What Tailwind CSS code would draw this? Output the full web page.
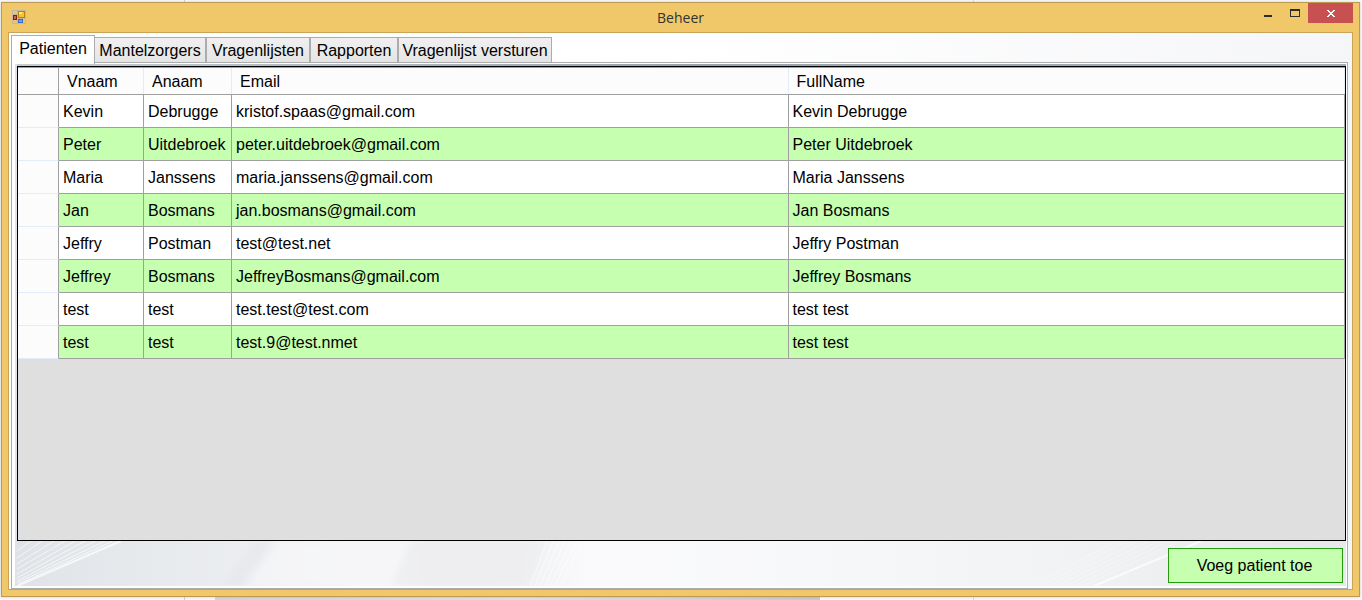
<!DOCTYPE html>
<html lang="nl">
<head>
<meta charset="utf-8">
<meta name="viewport" content="width=device-width, initial-scale=1">
<title>Beheer</title>
<script src="https://cdn.jsdelivr.net/npm/@tailwindcss/browser@4"></script>
</head>
<body class="flex min-h-screen flex-col bg-[#fafafa] font-['Liberation_Sans',Arial,sans-serif] text-base text-black">
<!-- page behind the window -->
<div class="absolute inset-0 -z-10 overflow-hidden" aria-hidden="true">
  <div class="absolute inset-y-0 left-[184px] w-px bg-[#d2d2d2]"></div>
  <div class="absolute inset-y-0 left-[973px] w-px bg-[#dedede]"></div>
  <div class="absolute bottom-0 left-[215px] h-1 w-[605px] bg-linear-to-r from-[#d5d7d9] via-[#e2e4e6] to-[#c9cbce]"></div>
</div>

<div class="mt-[2px] mr-[2px] mb-[3px] ml-px flex grow flex-col border border-[#bc9a50] bg-[#f0c869] px-[6px] pb-[6px] shadow-[0_0_3px_#0000002e]">
  <header class="grid h-[29px] grid-cols-[1fr_auto_1fr] items-start">
    <svg class="mt-[7px] ml-1 h-[14px] w-[14px]" viewBox="0 0 14 14" shape-rendering="crispEdges" aria-hidden="true">
      <path d="M.5 .5h13v13h-13zM.5 4.500h5M5.500 .5v13M5.500 8.500h8" fill="#e6c67a" stroke="#c3b99e"/>
      <rect x="6" y="1" width="7" height="7" fill="#b88310"/>
      <rect x="7" y="2" width="5" height="5" fill="#f5c52d"/>
      <rect x="7" y="2" width="3" height="2" fill="#ffe991"/>
      <rect x="1" y="5" width="4" height="5" fill="#8c1715"/>
      <rect x="2" y="6" width="2" height="3" fill="#cb6055"/>
      <rect x="6" y="9" width="5" height="4" fill="#3368c3"/>
      <rect x="7" y="10" width="3" height="2" fill="#70a4f2"/>
    </svg>
    <h1 class="mt-[5px] font-['Open_Sans','Noto_Sans',sans-serif] text-sm leading-5 text-[#333]">Beheer</h1>
    <div class="flex justify-end">
      <button type="button" aria-label="Minimaliseren" class="flex h-5 w-[27px] items-center justify-center">
        <svg class="h-5 w-[27px]" viewBox="0 0 27 20" shape-rendering="crispEdges"><rect x="9" y="12" width="8" height="2" fill="#2b2b2b"/></svg>
      </button>
      <button type="button" aria-label="Maximaliseren" class="flex h-5 w-[26px] items-center justify-center">
        <svg class="h-5 w-[26px]" viewBox="0 0 26 20" shape-rendering="crispEdges"><path d="M8 6h10v8H8zM9 8v5h8V8z" fill="#2b2b2b" fill-rule="evenodd"/></svg>
      </button>
      <button type="button" aria-label="Sluiten" class="flex h-5 w-[45px] items-center justify-center bg-[#c75050]">
        <svg class="h-5 w-[45px]" viewBox="0 0 45 20" shape-rendering="crispEdges"><path d="M19 7h2v1h1v1h2V8h1V7h2v1h-1v1h-1v1h-1v1h1v1h1v1h1v1h-2v-1h-1v-1h-2v1h-1v1h-2v-1h1v-1h1v-1h1v-1h-1V9h-1V8h-1z" fill="#fff"/></svg>
      </button>
    </div>
  </header>

  <main class="flex grow flex-col border border-[#c9a458] bg-linear-to-r from-[#fcfcfc] via-white to-[#f5f6f8] pr-1 pl-[2px]">
    <div role="tablist" class="mt-[2px] flex h-[27px] items-end">
      <button type="button" role="tab" id="tab-patienten" aria-controls="patienten" aria-selected="true" class="relative z-10 -mb-[2px] h-[29px] w-[84px] border border-b-0 border-[#acacac] bg-white pb-[3px] text-center leading-[22px]">Patienten</button>
      <button type="button" role="tab" aria-selected="false" class="h-[25px] w-[111px] border border-l-0 border-b-0 border-[#acacac] bg-linear-to-b from-[#f0f0f0] to-[#e5e5e5] pt-[2px] leading-[22px]">Mantelzorgers</button>
      <button type="button" role="tab" aria-selected="false" class="h-[25px] w-[104px] border border-b-0 border-[#acacac] bg-linear-to-b from-[#f0f0f0] to-[#e5e5e5] pt-[2px] leading-[22px]">Vragenlijsten</button>
      <button type="button" role="tab" aria-selected="false" class="h-[25px] w-[88px] border border-b-0 border-[#acacac] bg-linear-to-b from-[#f0f0f0] to-[#e5e5e5] pt-[2px] leading-[22px]">Rapporten</button>
      <button type="button" role="tab" aria-selected="false" class="h-[25px] w-[154px] border border-b-0 border-[#acacac] bg-linear-to-b from-[#f0f0f0] to-[#e5e5e5] pt-[2px] leading-[22px]">Vragenlijst versturen</button>
    </div>

    <section id="patienten" role="tabpanel" aria-labelledby="tab-patienten" class="flex grow flex-col border border-[#acacac] bg-white pt-px pr-px pb-[2px] pl-[3px]">
      <div class="relative isolate flex grow flex-col bg-[#dfe3e8] pl-[2px]">
        <div class="h-[2px] -z-10 bg-linear-to-r from-[#c5ccd2] via-[#9aa4ad] to-[#a4acb6]"></div>
        <div class="flex grow flex-col border border-black bg-[#dfdfdf]">
          <table class="w-full table-fixed border-separate border-spacing-0 text-left">
            <colgroup><col class="w-[41px]"><col class="w-[85px]"><col class="w-[88px]"><col><col></colgroup>
            <thead class="bg-[#fcfcfc]">
              <tr class="h-7 *:border-t *:border-b *:border-[#a0a0a0] *:p-0 *:font-normal *:leading-6">
                <td class="border-r"></td>
                <th scope="col"><div class="border-r border-[#e3edf9] pt-[2px] pl-2">Vnaam</div></th>
                <th scope="col"><div class="border-r border-[#e3edf9] pt-[2px] pl-2">Anaam</div></th>
                <th scope="col"><div class="border-r border-[#e3edf9] pt-[2px] pl-2">Email</div></th>
                <th scope="col"><div class="border-r border-[#e3edf9] pt-[2px] pl-2">FullName</div></th>
              </tr>
            </thead>
            <tbody class="[&_td]:h-[33px] [&_td]:border-r [&_td]:border-b [&_td]:border-[#a0a0a0] [&_td]:pt-[2px] [&_td]:pr-0 [&_td]:pb-0 [&_td]:pl-1 [&_th]:border-r [&_th]:border-b [&_th]:border-r-[#a0a0a0] [&_th]:border-b-[#e3edf9] [&_th]:bg-[#fcfcfc]">
              <tr class="bg-white"><th scope="row" aria-label="Rij 1"></th><td>Kevin</td><td>Debrugge</td><td>kristof.spaas@gmail.com</td><td>Kevin Debrugge</td></tr>
              <tr class="bg-[#c6ffb0]"><th scope="row" aria-label="Rij 2"></th><td>Peter</td><td>Uitdebroek</td><td>peter.uitdebroek@gmail.com</td><td>Peter Uitdebroek</td></tr>
              <tr class="bg-white"><th scope="row" aria-label="Rij 3"></th><td>Maria</td><td>Janssens</td><td>maria.janssens@gmail.com</td><td>Maria Janssens</td></tr>
              <tr class="bg-[#c6ffb0]"><th scope="row" aria-label="Rij 4"></th><td>Jan</td><td>Bosmans</td><td>jan.bosmans@gmail.com</td><td>Jan Bosmans</td></tr>
              <tr class="bg-white"><th scope="row" aria-label="Rij 5"></th><td>Jeffry</td><td>Postman</td><td>test@test.net</td><td>Jeffry Postman</td></tr>
              <tr class="bg-[#c6ffb0]"><th scope="row" aria-label="Rij 6"></th><td>Jeffrey</td><td>Bosmans</td><td>JeffreyBosmans@gmail.com</td><td>Jeffrey Bosmans</td></tr>
              <tr class="bg-white"><th scope="row" aria-label="Rij 7"></th><td>test</td><td>test</td><td>test.test@test.com</td><td>test test</td></tr>
              <tr class="bg-[#c6ffb0]"><th scope="row" aria-label="Rij 8"></th><td>test</td><td>test</td><td>test.9@test.nmet</td><td>test test</td></tr>
            </tbody>
          </table>
        </div>
        <footer class="relative flex h-[45px] items-start justify-end pt-[7px] pr-[3px]">
          <!-- decorative backdrop -->
          <svg class="absolute inset-0 -z-10 h-full w-full" viewBox="0 0 1329 45" preserveAspectRatio="none" aria-hidden="true">
            <defs>
              <linearGradient id="base"><stop offset="0" stop-color="#dfe3e7"/><stop offset=".08" stop-color="#e6e9ec"/><stop offset=".17" stop-color="#ebedf0"/><stop offset=".22" stop-color="#f2f3f5"/><stop offset=".28" stop-color="#f5f6f9"/><stop offset=".31" stop-color="#eff0f2"/><stop offset=".38" stop-color="#f0f1f3"/><stop offset=".43" stop-color="#fafafc"/><stop offset=".6" stop-color="#f7f8f9"/><stop offset=".8" stop-color="#f1f2f4"/><stop offset="1" stop-color="#e6e8eb"/></linearGradient>
              <filter id="soft"><feGaussianBlur stdDeviation="3"/></filter>
            </defs>
            <rect width="1329" height="45" fill="url(#base)"/>
            <g filter="url(#soft)">
              <path d="M205 45L238 0H256L222 45z" fill="#e4e6e9" opacity=".6"/>
              <path d="M230 45L262 0H392L374 45z" fill="#f6f7f9" opacity=".7"/>
              <path d="M374 45L394 0H530L512 45z" fill="#ecedef" opacity=".6"/>
            </g>
            <g fill="none" stroke="#fff" opacity=".65">
              <path d="M0 10L14 0M0 17L25 0M0 23L37 0M0 28L48 0M0 33L58 0M0 37L68 0M0 40L78 0M0 42L88 0M2 43L96 0"/>
              <path d="M513 45L530 0M518 45L536 0M523 45L542 0M528 45L548 0M533 45L554 0M538 45L560 0M543 45L566 0" stroke-opacity=".9"/>
              <path d="M1015 45L1100 0M1023 45L1110 0M1031 45L1121 0M1039 45L1132 0M1048 45L1142 0M1057 45L1152 0M1066 45L1162 0" stroke-opacity=".5"/>
            </g>
            <path d="M0 45L104 0M1077 45L1184 0" stroke="#fff" stroke-width="2" opacity=".7"/>
          </svg>
          <button type="button" class="h-[35px] w-[175px] border border-[#249a0d] bg-[#c6ffb0] pr-[2px] text-center">Voeg patient toe</button>
        </footer>
      </div>
    </section>
  </main>
</div>
</body>
</html>
